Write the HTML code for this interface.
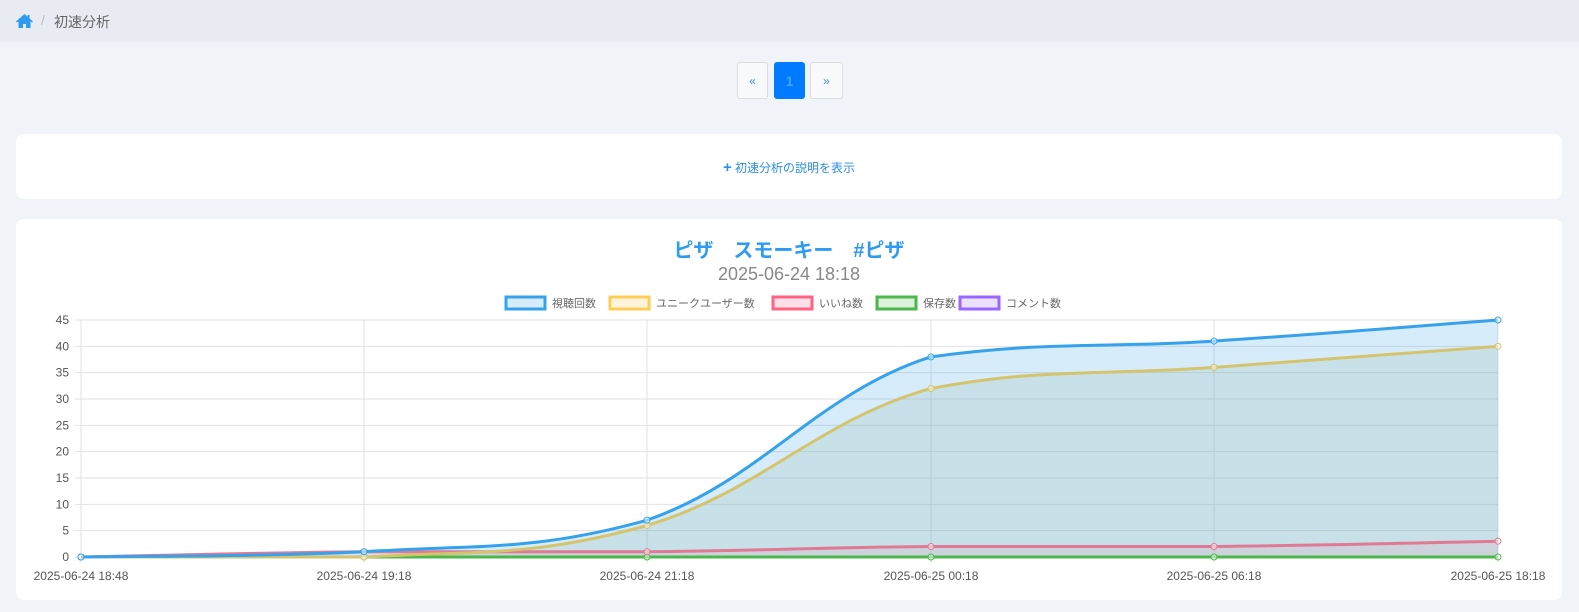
<!DOCTYPE html>
<html><head><meta charset="utf-8"><style>
body{margin:0;width:1579px;height:612px;background:#f0f3f7;font-family:"Liberation Sans","Noto Sans CJK JP",sans-serif;position:relative;overflow:hidden}
.bc{position:absolute;left:0;top:0;width:1579px;height:42px;background:#e8ebf2;font-size:14px;color:#666}
.pg{position:absolute;top:62px;height:37px;width:31px;border:1px solid #ddd;border-radius:3px;background:#f8f9fb;color:#3b8fd9;font-size:12px;text-align:center;line-height:36px;box-sizing:border-box}
.card{position:absolute;left:16px;width:1546px;background:#fff;border-radius:8px}
</style></head><body>
<div class="bc">
<svg style="position:absolute;left:16px;top:14px" width="17" height="14" viewBox="0 0 17 14"><path d="M8.5 0L0 7.5l1 1 1.5-1.3V14h4.5v-4h3v4H14.5V7.2L16 8.5l1-1L13.5 4.4V1h-2v1.6z" fill="#2e9bf2"/></svg>
<span style="position:absolute;left:41px;top:12px;color:#bbb">/</span>
<span style="position:absolute;left:54px;top:12px">初速分析</span>
</div>
<div class="pg" style="left:737px">«</div>
<div class="pg" style="left:774px;background:#007bff;border-color:#007bff;color:#3fa2ff;font-weight:bold;font-size:14px">1</div>
<div class="pg" style="left:810px;width:33px">»</div>
<div class="card" style="top:134px;height:65px"><div style="text-align:center;margin-top:25px;font-size:12px;color:#2e8fe6"><b style="font-size:15px">+</b> 初速分析の説明を表示</div></div>
<div class="card" style="top:219px;height:381px">
<div style="position:absolute;left:0;width:1546px;top:15px;text-align:center;color:#2e9bf2;font-weight:bold;font-size:20px">ピザ　スモーキー　#ピザ</div>
<div style="position:absolute;left:0;width:1546px;top:45px;text-align:center;color:#888;font-size:18px">2025-06-24 18:18</div>
</div>
<svg id="ch" style="position:absolute;left:0;top:0" width="1579" height="612"></svg>
<script>
var s=document.getElementById('ch'),h='';
var X=[81,364,647,931,1214,1498],y0=557,k=237/45;
for(var i=0;i<=9;i++){var y=y0-i*5*k;h+='<line x1="75" x2="1498" y1="'+y+'" y2="'+y+'" stroke="#e2e2e2"/><text x="69" y="'+(y+4)+'" text-anchor="end" font-size="12" fill="#555" font-family="Liberation Sans">'+(i*5)+'</text>';}
var L=['2025-06-24 18:48','2025-06-24 19:18','2025-06-24 21:18','2025-06-25 00:18','2025-06-25 06:18','2025-06-25 18:18'];
X.forEach(function(x,i){h+='<line x1="'+x+'" x2="'+x+'" y1="320" y2="563" stroke="#e2e2e2"/><text x="'+x+'" y="580" text-anchor="middle" font-size="12" fill="#555" font-family="Liberation Sans">'+L[i]+'</text>';});
function path(v){var P=v.map(function(d,i){return [X[i],y0-d*k]});var d='M'+P[0];for(var i=0;i<5;i++){var p0=P[Math.max(i-1,0)],p1=P[i],p2=P[i+1],p3=P[Math.min(i+2,5)];var t=0.2;
var c1=[p1[0]+(p2[0]-p0[0])*t,p1[1]+(p2[1]-p0[1])*t],c2=[p2[0]-(p3[0]-p1[0])*t,p2[1]-(p3[1]-p1[1])*t];
c1[1]=Math.min(Math.max(c1[1],Math.min(p1[1],p2[1])),Math.max(p1[1],p2[1]));c2[1]=Math.min(Math.max(c2[1],Math.min(p1[1],p2[1])),Math.max(p1[1],p2[1]));
d+=' C'+c1+' '+c2+' '+p2;}return [d,P];}
var S=[[[0,0,0,0,0,0],'#4bb84b','rgba(0,0,0,0)'],[[0,1,1,2,2,3],'#e07a94','rgba(255,99,132,0.1)'],[[0,0,6,32,36,40],'#d4c46e','rgba(150,180,160,0.22)'],[[0,1,7,38,41,45],'#36a2eb','rgba(54,162,235,0.2)']];
[S[3],S[2],S[1]].forEach(function(o){var r=path(o[0]);h+='<path d="'+r[0]+' L1498,557 L81,557Z" fill="'+o[2]+'"/>';});
S.forEach(function(o){var r=path(o[0]);h+='<path d="'+r[0]+'" fill="none" stroke="'+o[1]+'" stroke-width="3"/>';r[1].forEach(function(p){h+='<circle cx="'+p[0]+'" cy="'+p[1]+'" r="3" fill="#fff" fill-opacity=".5" stroke="'+o[1]+'"/>';});});
var lg=[[505,'視聴回数','#36a2eb','#d7ecfb'],[609,'ユニークユーザー数','#ffcd56','#fff5dd'],[772,'いいね数','#ff6384','#ffe0e6'],[876,'保存数','#4bb84b','#dbf1db'],[959,'コメント数','#9966ff','#ebe0ff']];
lg.forEach(function(l){h+='<rect x="'+(l[0]+1)+'" y="297" width="39" height="12" fill="'+l[3]+'" stroke="'+l[2]+'" stroke-width="3"/><text x="'+(l[0]+47)+'" y="307" font-size="11" fill="#666" font-family="Liberation Sans,Noto Sans CJK JP,sans-serif">'+l[1]+'</text>';});
s.innerHTML=h;
</script>
</body></html>
